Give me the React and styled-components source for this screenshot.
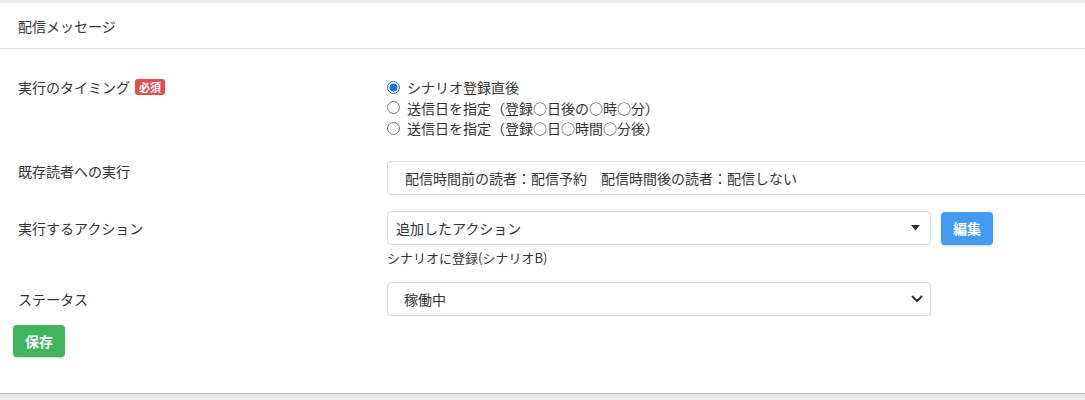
import React from "react";
import styled, { createGlobalStyle } from "styled-components";

const Global = createGlobalStyle`
  html, body { margin: 0; padding: 0; background: #e9ecef; overflow: hidden; }
  body {
    font-family: "Noto Sans CJK JP", "Noto Sans", "Liberation Sans", sans-serif;
    font-size: 14px;
    color: #333;
  }
`;

const Page = styled.div`
  padding-top: 3px;
  height: 400px;
  box-sizing: border-box;
`;

const Card = styled.div`
  background: #fff;
  width: calc(100% + 12px);
  height: 391px;
  box-sizing: border-box;
  border-bottom: 1px solid #b9c0c8;
  box-shadow: 0 1px 2px rgba(0, 0, 0, 0.08);
`;

const CardHeader = styled.div`
  height: 46px;
  box-sizing: border-box;
  border-bottom: 1px solid #dcdfe4;
  padding: 0 18px;
  display: flex;
  align-items: center;
  font-size: 14px;
  color: #333;
`;

const CardBody = styled.div`
  padding: 28px 0 0 13px;
`;

const FormRow = styled.div`
  display: grid;
  grid-template-columns: 374px 1fr;
  align-items: ${(p) => p.$align || "start"};
  margin-top: ${(p) => p.$mt || 0}px;
`;

const Label = styled.div`
  padding-left: 5px;
  line-height: 20px;
  display: flex;
  align-items: center;
  gap: 5px;
  white-space: nowrap;
`;

const Badge = styled.span`
  background: #df4f4f;
  color: #fff;
  font-size: 11px;
  font-weight: 700;
  line-height: 14px;
  padding: 1px 4px;
  border-radius: 3px;
`;

const RadioGroup = styled.div`
  display: flex;
  flex-direction: column;
`;

const RadioLine = styled.label`
  display: flex;
  align-items: center;
  gap: 7px;
  height: 20.5px;
  line-height: 20px;
  white-space: nowrap;
`;

const Radio = styled.input`
  margin: 0;
  width: 13px;
  height: 13px;
  accent-color: #1a73e8;
`;

const ReadonlyBox = styled.div`
  height: 34px;
  box-sizing: border-box;
  border: 1px solid #dadde2;
  border-right: none;
  border-radius: 4px 0 0 4px;
  padding: 0 17px;
  display: flex;
  align-items: center;
  white-space: nowrap;
  color: #333;
`;

const ControlLine = styled.div`
  display: flex;
  align-items: center;
  gap: 10px;
`;

const SelectBox = styled.div`
  width: 544px;
  height: 34px;
  box-sizing: border-box;
  border: 1px solid #d6d9de;
  border-radius: 4px;
  padding: 0 ${(p) => p.$pr}px 0 ${(p) => p.$pl}px;
  display: flex;
  align-items: center;
  justify-content: space-between;
  color: #333;
`;

const Button = styled.button`
  font-family: inherit;
  font-size: 14px;
  font-weight: 700;
  color: #fff;
  background: ${(p) => p.$bg};
  border: none;
  border-radius: 4px;
  width: 52px;
  height: ${(p) => p.$h}px;
  padding: 0;
  box-shadow: 0 1px 2px rgba(0, 0, 0, 0.18);
  cursor: pointer;
`;

const Help = styled.div`
  font-size: 13px;
  line-height: 18px;
  margin-top: 4px;
  color: #333;
`;

const SaveWrap = styled.div`
  margin-top: 9px;
`;

const Caret = () => (
  <svg width="9" height="6" viewBox="0 0 9 6">
    <path d="M0 0 H9 L4.5 5.5 Z" fill="#333" />
  </svg>
);

const Chevron = () => (
  <svg width="12" height="8" viewBox="0 0 12 8">
    <path d="M1.5 1.5 L6 6 L10.5 1.5" fill="none" stroke="#333" strokeWidth="2" strokeLinecap="round" strokeLinejoin="round" />
  </svg>
);

export default function App() {
  return (
    <Page>
      <Global />
      <Card>
        <CardHeader>配信メッセージ</CardHeader>
        <CardBody>
          <FormRow>
            <Label>
              実行のタイミング<Badge>必須</Badge>
            </Label>
            <RadioGroup>
              <RadioLine>
                <Radio type="radio" name="timing" defaultChecked />
                シナリオ登録直後
              </RadioLine>
              <RadioLine>
                <Radio type="radio" name="timing" />
                送信日を指定（登録○日後の○時○分）
              </RadioLine>
              <RadioLine>
                <Radio type="radio" name="timing" />
                送信日を指定（登録○日○時間○分後）
              </RadioLine>
            </RadioGroup>
          </FormRow>

          <FormRow $mt={22.5}>
            <Label>既存読者への実行</Label>
            <ReadonlyBox>配信時間前の読者：配信予約　配信時間後の読者：配信しない</ReadonlyBox>
          </FormRow>

          <FormRow $mt={16}>
            <Label style={{ height: 34 }}>実行するアクション</Label>
            <div>
              <ControlLine>
                <SelectBox $pl={8} $pr={10}>
                  <span>追加したアクション</span>
                  <Caret />
                </SelectBox>
                <Button $bg="#429bf5" $h={33}>編集</Button>
              </ControlLine>
              <Help>シナリオに登録(シナリオB)</Help>
            </div>
          </FormRow>

          <FormRow $mt={15} $align="center">
            <Label>ステータス</Label>
            <SelectBox $pl={16} $pr={7}>
              <span>稼働中</span>
              <Chevron />
            </SelectBox>
          </FormRow>

          <SaveWrap>
            <Button $bg="#41b55e" $h={32}>保存</Button>
          </SaveWrap>
        </CardBody>
      </Card>
    </Page>
  );
}
